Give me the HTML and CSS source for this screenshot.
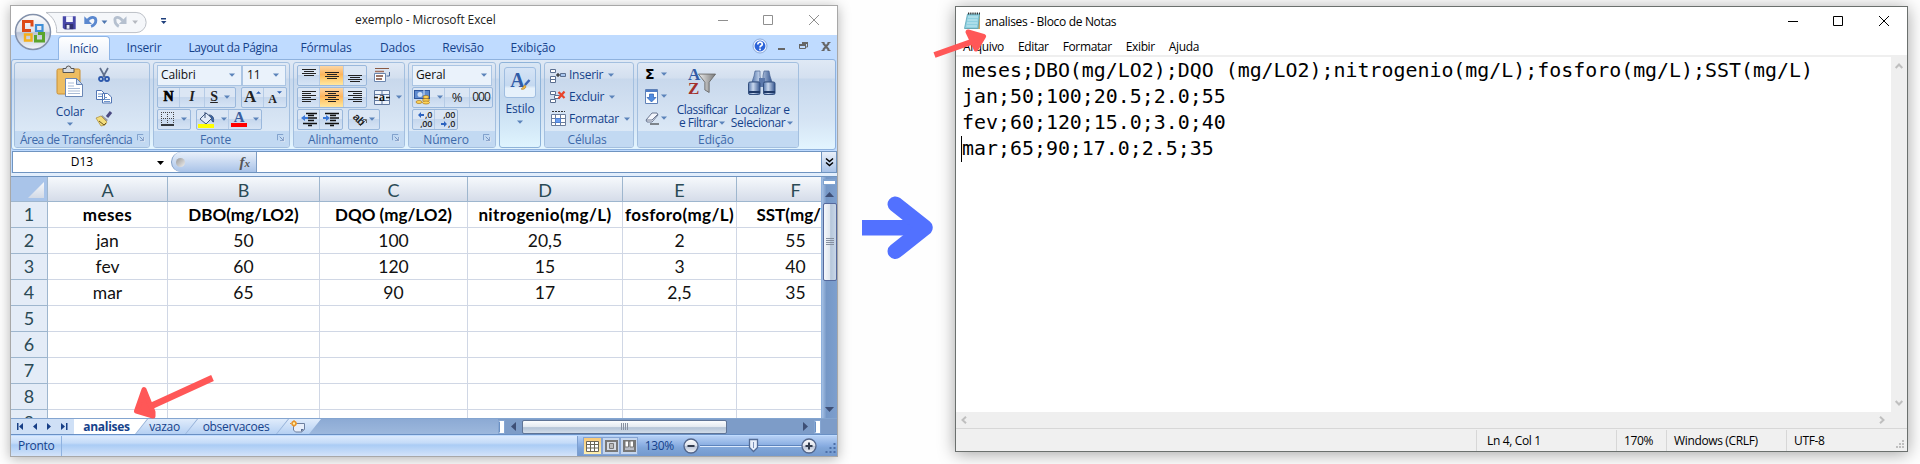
FILE: index.html
```html
<!DOCTYPE html>
<html lang="pt-BR">
<head>
<meta charset="utf-8">
<title>exemplo - Microsoft Excel</title>
<link rel="stylesheet" href="styles.css">
</head>
<body>
<svg class="defs" width="0" height="0">
  <defs>
    <linearGradient id="gloss" x1="0" y1="0" x2="0" y2="1"><stop offset="0" stop-color="#fff"/><stop offset=".48" stop-color="#dfe3ec"/><stop offset=".52" stop-color="#b9c3d6"/><stop offset="1" stop-color="#f4f6fa"/></linearGradient>
    <linearGradient id="steel" x1="0" y1="0" x2="1" y2="0"><stop offset="0" stop-color="#5577ad"/><stop offset=".4" stop-color="#c9d8ee"/><stop offset="1" stop-color="#34558f"/></linearGradient>
    <linearGradient id="funnel" x1="0" y1="0" x2="1" y2="0"><stop offset="0" stop-color="#eee"/><stop offset="1" stop-color="#777"/></linearGradient>
    <linearGradient id="corner" x1="0" y1="0" x2="0" y2="1"><stop offset="0" stop-color="#f6f8fb"/><stop offset="1" stop-color="#d3dae6"/></linearGradient>
    <symbol id="launch" viewBox="0 0 9 9"><path d="M.5 7V.5H7" fill="none" stroke="#7496c6"/><path d="M3.5 8.5h5v-5z" fill="#fff"/><path d="M3 3l4 4M7.5 3.500v4h-4" fill="none" stroke="#6a8bbb"/></symbol>
    <symbol id="drop" viewBox="0 0 6 4"><path d="M0 .5h6L3 3.700z"/></symbol>
  </defs>
</svg>

<main class="stage">
<section class="excel">
  <header class="xl-title">
    <svg class="qat" width="120" height="24" viewBox="0 0 120 24">
      <path d="M0 1h94a10.500 10.500 0 0 1 0 21H11C12 13 7 5 0 1z" fill="#f5f7fa" stroke="#b9bdc4"/>
      <path d="M17.500 5h13.500v13.500H19L17.500 17z" fill="#4747a8"/><path d="M21 5h7v6h-7z" fill="#f5f7ff"/><path d="M20 13h8.500v5.500H20z" fill="#303070"/><path d="M21.500 14h3v4h-3z" fill="#e8ecf8"/>
      <path d="M43 9.500c4-5 9-4 9 0 0 3-2 5-5 6" fill="none" stroke="#5b88cf" stroke-width="3"/><path d="M40 5v8h8z" fill="#5b88cf"/>
      <path d="M58 9.500h6l-3 3.500z" fill="#4f77b0"/>
      <path d="M80 9.500c-4-5-9-4-8 0 0 3 2 5 4 6" fill="none" stroke="#b5c0cf" stroke-width="3"/><path d="M84 5v8h-8z" fill="#b5c0cf"/>
      <path d="M90 9.500h6l-3 3.500z" fill="#b5b9c0"/>
    </svg>
    <svg class="qat-more" width="6" height="8" viewBox="0 0 6 8"><path d="M0 0h5v1.500H0zM0 3h5.500L2.700 6z" fill="#1e3f7c"/></svg>
    <span class="xl-caption">exemplo - Microsoft Excel</span>
    <svg class="win-btns" width="102" height="12" viewBox="0 0 102 12" fill="none" stroke="#8f8f8f"><path d="M0 6.500h10M45.500 1.500h9v9h-9zM91 1l10 10M101 1L91 11"/></svg>
  </header>

  <nav class="xl-tabs">
    <span class="tab on">Início</span>
    <span class="tab t2">Inserir</span>
    <span class="tab t3">Layout da Página</span>
    <span class="tab t4">Fórmulas</span>
    <span class="tab t5">Dados</span>
    <span class="tab t6">Revisão</span>
    <span class="tab t7">Exibição</span>
    <svg class="mdi" width="80" height="16" viewBox="0 0 80 16">
      <circle cx="8" cy="8" r="6.200" fill="#2c63d8" stroke="#eef4ff" stroke-width="1.500"/><circle cx="8" cy="8" r="7" fill="none" stroke="#6b8fc9" stroke-width=".7"/>
      <path d="M5.800 6.500c0-3.300 4.700-3 4.400-.2C10 8 8 7.600 8 9.500M8 10.500v1.700" fill="none" stroke="#fff" stroke-width="1.700"/>
      <path d="M26 10h7v2h-7zM50 4h6v2h-6zM47 6h7v2h-7z" fill="#666"/><path d="M47.500 6.500h6v4h-6zM55.500 5v4h-1.500" fill="none" stroke="#666"/>
      <path d="M71 5l6 7M77 5l-6 7" stroke="#666" stroke-width="2"/><path d="M69.500 4.500h3M75.500 4.500h3M69.500 12.500h3M75.500 12.500h3" stroke="#666"/>
    </svg>
  </nav>

  <div class="ribbon">
    <div class="group g-clip">
      <div class="gbody">
        <div class="big paste">
          <svg width="28" height="31" viewBox="0 0 28 31"><rect x="1" y="3" width="23" height="25" rx="1.500" fill="#edbd62" stroke="#c98f35"/><path d="M7 2.500h3a2.500 2.500 0 0 1 5 0h3v4H7z" fill="#d8dce2" stroke="#555"/><path d="M9.500 12.500h11l6 6V30.500h-17z" fill="#fff" stroke="#6b87b5"/><path d="M20.500 12.500v6h6z" fill="#cddcf0" stroke="#6b87b5"/><path d="M12 17h6M12 20h6M12 22.500h12M12 25h12M12 27.500h12" stroke="#a9bbd6"/></svg>
          <span>Colar</span><svg class="drop" width="6" height="4"><use href="#drop"/></svg>
        </div>
        <div class="stack">
          <svg width="16" height="16" viewBox="0 0 16 16"><path d="M4 1l5 9M12 1L7 10" stroke="#5f6f8c" stroke-width="1.700"/><circle cx="5" cy="12" r="2" fill="none" stroke="#2c58ac" stroke-width="1.800"/><circle cx="11" cy="12" r="2" fill="none" stroke="#2c58ac" stroke-width="1.800"/></svg>
          <svg width="16" height="16" viewBox="0 0 16 16" fill="#fff" stroke="#5276b4"><path d="M.5 1.500h5l3 3v6h-8zM6.500 4.500h5l4 3.500v6h-9z"/><path d="M2 5h4M2 7.500h4M8 8.500h3M8 10.500h6M8 12.500h6" stroke="#6d93ca"/></svg>
          <svg width="16" height="16" viewBox="0 0 16 16"><path d="M11 6l4-5" stroke="#4b4a82" stroke-width="3"/><path d="M6 4l6 5-2 2-5-5z" fill="#999aa5"/><path d="M0 7l5-2 6 6-2 3-4 1z" fill="#f3dd7b" stroke="#a98a35" stroke-width=".7"/><path d="M3 10l5 4 2-2" stroke="#6a5420" fill="none"/></svg>
        </div>
      </div>
      <div class="glabel"><span class="tight">Área de Transferência</span><svg class="launch" width="8" height="8"><use href="#launch"/></svg></div>
    </div>

    <div class="group g-font">
      <div class="rows">
        <div class="row">
          <span class="field f1">Calibri<svg class="drop" width="6" height="4"><use href="#drop"/></svg></span>
          <span class="field f2">11<svg class="drop" width="6" height="4"><use href="#drop"/></svg></span>
        </div>
        <div class="row r5">
          <span class="btns"><b class="c serif w22">N</b><i class="c serif w24">I</i><span class="c serif w30 und"><u>S</u><svg class="drop" width="6" height="4"><use href="#drop"/></svg></span></span>
          <span class="btns"><span class="c serif w22 ga">A<svg class="mini" width="5" height="3" viewBox="0 0 6 3"><path d="M0 3h6L3 0z"/></svg></span><span class="c serif w22 gs">A<svg class="mini" width="5" height="3" viewBox="0 0 6 3"><path d="M0 0h6L3 3z"/></svg></span></span>
        </div>
        <div class="row r5">
          <span class="btns"><span class="c w33"><svg width="14" height="14" viewBox="0 0 14 14"><path d="M0 .5h13M0 6.500h13M.5 0v12M6.500 0v12M12.500 0v12" stroke="#444" stroke-dasharray="1 1"/><path d="M0 13h13" stroke="#000" stroke-width="1.500"/></svg><svg class="drop" width="6" height="4"><use href="#drop"/></svg></span></span>
          <span class="btns"><span class="c w33"><svg width="17" height="17" viewBox="0 0 17 17"><path d="M2 8l6-6 6 5-6 6z" fill="#e3ecf8" stroke="#3d557c"/><path d="M7 1v6M11 4c4 0 5 3 4.500 7-1.500 0-2-2-2-4z" fill="#3b6cb7" stroke="#3d557c"/><path d="M0 13h16v4H0z" fill="#ff0"/></svg><svg class="drop" width="6" height="4"><use href="#drop"/></svg></span><span class="c w33"><span class="fcolor serif">A</span><svg class="drop" width="6" height="4"><use href="#drop"/></svg></span></span>
        </div>
      </div>
      <div class="glabel"><span>Fonte</span><svg class="launch" width="8" height="8"><use href="#launch"/></svg></div>
    </div>

    <div class="group g-align">
      <div class="rows">
        <div class="row r7">
          <span class="btns al"><span class="c"><svg width="14" height="14" viewBox="0 0 14 14"><path d="M0 1.500h14M2 3.500h10M0 5.500h14M2 7.500h10" stroke="#222"/></svg></span><span class="c hot"><svg width="14" height="14" viewBox="0 0 14 14"><path d="M0 4.500h14M2 6.500h10M0 8.500h14M2 10.500h10" stroke="#222"/></svg></span><span class="c"><svg width="14" height="14" viewBox="0 0 14 14"><path d="M0 7.500h14M2 9.500h10M0 11.500h14M2 13.500h10" stroke="#222"/></svg></span></span>
          <svg width="17" height="16" viewBox="0 0 17 16"><path d="M1 1.500h14" stroke="#8a5a44"/><path d="M1 4.500h9M1 12.500h9" stroke="#a07060" stroke-width="1.500"/><path d="M.5 6.500h11v8H.5z" fill="#fff" stroke="#6b86ae"/><path d="M2 9h7M2 12h6" stroke="#7a4a3a" stroke-width="1.500"/><path d="M15.500 5v4h-3" fill="none" stroke="#4c6c9c"/></svg>
        </div>
        <div class="row r7">
          <span class="btns al"><span class="c"><svg width="14" height="14" viewBox="0 0 14 14"><path d="M0 1.500h14M0 3.500h9M0 5.500h14M0 7.500h9M0 9.500h14M0 11.500h9" stroke="#222"/></svg></span><span class="c hot"><svg width="14" height="14" viewBox="0 0 14 14"><path d="M0 1.500h14M3 3.500h8M0 5.500h14M3 7.500h8M0 9.500h14M3 11.500h8" stroke="#222"/></svg></span><span class="c"><svg width="14" height="14" viewBox="0 0 14 14"><path d="M0 1.500h14M5 3.500h9M0 5.500h14M5 7.500h9M0 9.500h14M5 11.500h9" stroke="#222"/></svg></span></span>
          <span class="merge"><svg width="16" height="15" viewBox="0 0 16 15"><path d="M.5.5h15v14H.5zM.5 4.500h15M.5 10.500h15M8 .5v4M8 10.500v4" fill="#eef4fc" stroke="#60789f"/><path d="M0 7.500h4M12 7.500h4" stroke="#222" stroke-width="1.500"/></svg><b>a</b><svg class="drop" width="6" height="4"><use href="#drop"/></svg></span>
        </div>
        <div class="row r5">
          <span class="btns"><span class="c w22"><svg width="16" height="14" viewBox="0 0 16 14"><path d="M5 1.500h11M7 3.500h6M7 6h9M7 8.500h6M2 11.500h14M7 13.500h4" stroke="#111" stroke-width="1.300"/><path d="M0 6l4-3v2h3v2H4v2z" fill="#3b78d8"/></svg></span><span class="c w22"><svg width="16" height="14" viewBox="0 0 16 14"><path d="M2 1.500h14M7 3.500h6M7 6h9M7 8.500h6M2 11.500h14M7 13.500h4" stroke="#111" stroke-width="1.300"/><path d="M7 6L3 3v2H0v2h3v2z" fill="#3b78d8"/></svg></span></span>
          <span class="btns"><span class="c w31"><span class="orient">ab</span><svg class="diag" width="8" height="8" viewBox="0 0 8 8"><path d="M0 8L6 2M3 1.500h3.500V5" fill="none" stroke="#666"/></svg><svg class="drop" width="6" height="4"><use href="#drop"/></svg></span></span>
        </div>
      </div>
      <div class="glabel"><span>Alinhamento</span><svg class="launch" width="8" height="8"><use href="#launch"/></svg></div>
    </div>

    <div class="group g-num">
      <div class="rows">
        <div class="row"><span class="field f3">Geral<svg class="drop" width="6" height="4"><use href="#drop"/></svg></span></div>
        <div class="row">
          <span class="btns"><span class="c w33"><svg width="17" height="16" viewBox="0 0 17 16"><rect x=".5" y="1.500" width="15" height="8" fill="#5f8bcf" stroke="#2f569b"/><circle cx="6" cy="5.500" r="2.500" fill="#cfe0f7"/><path d="M10 1v5" stroke="#cfe0f7"/><ellipse cx="12" cy="8" rx="3" ry="1.500" fill="#ffd65c" stroke="#a8761a" stroke-width=".7"/><ellipse cx="12" cy="11" rx="3.500" ry="1.500" fill="#ffd65c" stroke="#a8761a" stroke-width=".7"/><ellipse cx="12" cy="13.500" rx="3.500" ry="1.500" fill="#ffd65c" stroke="#a8761a" stroke-width=".7"/><ellipse cx="5" cy="13" rx="3" ry="1.500" fill="#ffd65c" stroke="#a8761a" stroke-width=".7"/></svg><svg class="drop" width="6" height="4"><use href="#drop"/></svg></span><span class="c w24 pct">%</span><span class="c w22 mil">000</span></span>
        </div>
        <div class="row">
          <span class="btns"><span class="c w22 dec"><span><svg class="arw" width="6" height="6" viewBox="0 0 6 6"><path d="M0 3l3-3v2h3v2H3v2z"/></svg>,0</span><span>,00</span></span><span class="c w22 dec"><span>,00</span><span><svg class="arw" width="6" height="6" viewBox="0 0 6 6"><path d="M6 3L3 0v2H0v2h3v2z"/></svg>,0</span></span></span>
        </div>
      </div>
      <div class="glabel"><span>Número</span><svg class="launch" width="8" height="8"><use href="#launch"/></svg></div>
    </div>

    <div class="group g-style">
      <div class="style-box"><span class="serif">A</span><svg width="9" height="10" viewBox="0 0 9 10"><path d="M8.500 0L4 5" stroke="#3f67b5" stroke-width="2.500"/><path d="M0 9c2 0 2-4 4-4l1 2c-1 2-3 3-5 2z" fill="#f0b63e" stroke="#9a6a20" stroke-width=".5"/></svg></div>
      <span>Estilo</span><svg class="drop" width="6" height="4"><use href="#drop"/></svg>
    </div>

    <div class="group g-cells">
      <div class="rows">
        <div class="row cellrow"><svg width="16" height="15" viewBox="0 0 16 15" fill="#fff" stroke="#5b6f90"><path d="M.5 1.500h5v3h-5zM.5 8.500h5v3h-5zM.5 11.500h5v3h-5z"/><path d="M10.500 5.500h5v3h-5z" fill="#a9c6ef"/><path d="M6 7h4M8 5v4" stroke="#111"/></svg><span>Inserir</span><svg class="drop" width="6" height="4"><use href="#drop"/></svg></div>
        <div class="row cellrow"><svg width="16" height="15" viewBox="0 0 16 15" fill="#fff" stroke="#5b6f90"><path d="M.5 1.500h5v3h-5zM4.500 5.500h5v3h-5zM.5 9.500h5v3h-5z"/><path d="M8.500 2l6 6M14.500 1.500l-6 7" stroke="#e8442c" stroke-width="2.200"/></svg><span>Excluir</span><svg class="drop" width="6" height="4"><use href="#drop"/></svg></div>
        <div class="row cellrow"><svg width="16" height="16" viewBox="0 0 16 16" fill="#fff" stroke="#6b7d9c"><path d="M1.500 3.500h14v11h-14zM1.500 7.500h14M1.500 11.500h14M5.500 3v12M10.500 3v12"/><path d="M5.500 7.500h5v4h-5z" fill="#6a9df0" stroke="#4f80d0"/><path d="M2 .5h13" stroke="#333" stroke-dasharray="2 1"/></svg><span>Formatar</span><svg class="drop" width="6" height="4"><use href="#drop"/></svg></div>
      </div>
      <div class="glabel"><span>Células</span></div>
    </div>

    <div class="group g-edit">
      <div class="gbody">
        <div class="stack ed">
          <span class="item"><b class="sigma">Σ</b><svg class="drop" width="6" height="4"><use href="#drop"/></svg></span>
          <span class="item"><svg width="13" height="15" viewBox="0 0 13 15"><path d="M.5.500h12v14H.5z" fill="#fff" stroke="#5f81b7"/><path d="M1 1h11v2H1z" fill="#4f7cc6"/><path d="M4.500 5h4v3.500H11L6.500 13 2 8.500h2.500z" fill="#4f8be0" stroke="#2c5fb2" stroke-width=".7"/></svg><svg class="drop" width="6" height="4"><use href="#drop"/></svg></span>
          <span class="item"><svg width="15" height="13" viewBox="0 0 15 13"><path d="M1 8l6-7h5l1 2-6 7H2z" fill="#f3f5fb" stroke="#6c7892"/><path d="M7 8h-6M7 8l6-6" stroke="#6c7892" fill="none"/><path d="M5 12h9" stroke="#222"/></svg><svg class="drop" width="6" height="4"><use href="#drop"/></svg></span>
        </div>
        <div class="big sort">
          <span class="az"><span class="letters serif"><span class="la">A</span><span class="lz">Z</span></span><svg width="18" height="23" viewBox="0 0 21 23"><path d="M.5.500h20L13 10v12l-5-3v-9z" fill="url(#funnel)" stroke="#666"/></svg></span>
          <span>Classificar</span><span>e Filtrar <svg class="drop" width="6" height="4"><use href="#drop"/></svg></span>
        </div>
        <div class="big find">
          <svg width="28" height="26" viewBox="0 0 28 26"><path d="M7 1h5v5l1 6H4l2-6zM16 1h5l1 5 2 6h-9V6z" fill="url(#steel)" stroke="#4c6594" stroke-width=".7"/><path d="M11 8h6v9h-6z" fill="#5b78ab"/><rect x=".5" y="12" width="11.500" height="12.500" rx="1.500" fill="url(#steel)" stroke="#34507f"/><rect x="15.500" y="12" width="11.500" height="12.500" rx="1.500" fill="url(#steel)" stroke="#34507f"/><path d="M1 22h11M16 22h11" stroke="#203a68" stroke-width="2"/></svg>
          <span>Localizar e</span><span>Selecionar <svg class="drop" width="6" height="4"><use href="#drop"/></svg></span>
        </div>
      </div>
      <div class="glabel"><span>Edição</span></div>
    </div>
  </div>

  <div class="formula">
    <span class="namebox">D13</span>
    <svg class="namedrop" width="7" height="4" viewBox="0 0 7 4"><path d="M0 0h7L3.500 4z"/></svg>
    <span class="fx"><i class="knob"></i><i class="f">f<small>x</small></i></span>
    <span class="finput"></span>
    <span class="fexp"><svg width="7" height="9" viewBox="0 0 7 9" fill="none" stroke="#000" stroke-width="1.500"><path d="M0 .500l3.500 3L7 .500M0 4.500l3.500 3 3.500-3"/></svg></span>
  </div>
  <div class="strip"></div>

  <div class="sheet">
    <div class="grid">
      <span class="hc all"><svg width="16" height="16" viewBox="0 0 16 16"><path d="M0 16h16V0z" fill="url(#corner)"/></svg></span><span class="hc">A</span><span class="hc">B</span><span class="hc">C</span><span class="hc">D</span><span class="hc">E</span><span class="hc">F</span>
      <span class="rh">1</span><b class="wide">meses</b><b>DBO(mg/LO2)</b><b>DQO (mg/LO2)</b><b class="wide">nitrogenio(mg/L)</b><b class="wide">fosforo(mg/L)</b><b>SST(mg/L)</b>
      <span class="rh">2</span><span>jan</span><span>50</span><span>100</span><span>20,5</span><span>2</span><span>55</span>
      <span class="rh">3</span><span>fev</span><span>60</span><span>120</span><span>15</span><span>3</span><span>40</span>
      <span class="rh">4</span><span>mar</span><span>65</span><span>90</span><span>17</span><span>2,5</span><span>35</span>
      <span class="rh">5</span><span></span><span></span><span></span><span></span><span></span><span></span>
      <span class="rh">6</span><span></span><span></span><span></span><span></span><span></span><span></span>
      <span class="rh">7</span><span></span><span></span><span></span><span></span><span></span><span></span>
      <span class="rh">8</span><span></span><span></span><span></span><span></span><span></span><span></span>
      <span class="rh">9</span><span></span><span></span><span></span><span></span><span></span><span></span>
    </div>
    <div class="vbar">
      <span class="split"></span>
      <svg class="va" width="9" height="5" viewBox="0 0 9 5"><path d="M0 5h9L4.500 0z" fill="#3e4f76"/></svg>
      <span class="vthumb"><svg width="8" height="8" viewBox="0 0 8 8"><path d="M0 .500h8M0 2.500h8M0 4.500h8M0 6.500h8" stroke="#8790a0"/></svg></span>
      <svg class="vd" width="9" height="5" viewBox="0 0 9 5"><path d="M0 0h9L4.500 5z" fill="#3e4f76"/></svg>
    </div>
  </div>

  <div class="sheettabs">
    <svg class="navs" width="63" height="15" viewBox="0 0 63 15"><path d="M6 4h1.500v7H6zM12 4v7L8 7.500zM26 4v7l-4-3.500zM36 4v7l4-3.500zM50 4v7l4-3.500zM55 4h1.500v7H55z" fill="#173f86"/></svg>
    <span class="st on">analises</span><span class="st s2">vazao</span><span class="st s3">observacoes</span>
    <span class="st s4"><svg width="15" height="13" viewBox="0 0 15 13"><path d="M3.500 3.500h11v6l-3 2.500h-6l-2-2z" fill="#e7eefa" stroke="#6d7f9f"/><path d="M14 9l-3 3V9z" fill="#5b6f92"/><circle cx="4" cy="3.500" r="2" fill="#fff1a8" stroke="#e8922a" stroke-width="1.500"/><path d="M4 0v7M0 3.500h8" stroke="#e8922a" stroke-dasharray="1.200 4.600"/></svg></span>
    <span class="tabfill"></span>
    <span class="hbar"><i class="hsplit"></i><svg class="ha" width="5" height="9" viewBox="0 0 5 9"><path d="M5 0v9L0 4.500z" fill="#3e4f76"/></svg><span class="hthumb"><svg width="8" height="7" viewBox="0 0 8 7"><path d="M.500 0v7M2.500 0v7M4.500 0v7M6.500 0v7" stroke="#8790a0"/></svg></span><svg class="hd" width="5" height="9" viewBox="0 0 5 9"><path d="M0 0v9l5-4.500z" fill="#3e4f76"/></svg><i class="hsplit last"></i></span>
  </div>

  <footer class="xl-status">
    <span class="ready">Pronto</span><span class="sfill"></span>
    <span class="views"><i class="v on"><svg width="13" height="11" viewBox="0 0 13 11"><path d="M.5.500h12v10H.5zM.5 3.500h12M.5 7h12M4.500.500v10M8.500.500v10" fill="#fff" stroke="#6a6455"/></svg></i><i class="v"><svg width="13" height="12" viewBox="0 0 13 12"><path d="M1 1h11v10H1z" fill="#d7dce4" stroke="#777" stroke-width="2"/><path d="M4.500 3.500h4v5h-4zM5 5h3M5 7h3" fill="#fff" stroke="#777"/></svg></i><i class="v"><svg width="13" height="12" viewBox="0 0 13 12"><path d="M1 1h11v10H1z" fill="#b9bdc6" stroke="#777" stroke-width="2"/><path d="M2 1h3.500v6H2zM7 1h3.500v6H7z" fill="#fff" stroke="#777"/></svg></i></span>
    <span class="zoom">130%</span>
    <svg class="slider" width="149" height="20" viewBox="0 0 149 20"><path d="M24 9.500h102" stroke="#5d84bd"/><path d="M24 10.500h102" stroke="#dceafd"/><circle cx="15" cy="10" r="7" fill="url(#gloss)" stroke="#52658a" stroke-width="1.300"/><path d="M11.500 10h7" stroke="#333c4e" stroke-width="2"/><path d="M73.500 3.500h8v8l-4 4-4-4z" fill="#e8effa" stroke="#536c97" stroke-width="1.300"/><path d="M77.500 6v6" stroke="#7d91b5"/><circle cx="133" cy="10" r="7" fill="url(#gloss)" stroke="#52658a" stroke-width="1.300"/><path d="M129.500 10h7M133 6.500v7" stroke="#333c4e" stroke-width="2"/></svg>
    <svg class="grip" width="11" height="11" viewBox="0 0 11 11"><path d="M8 0h2v2H8zM4 4h2v2H4zM8 4h2v2H8zM0 8h2v2H0zM4 8h2v2H4zM8 8h2v2H8z" fill="#4c6fa8"/></svg>
  </footer>

  <svg class="orb" width="38" height="38" viewBox="0 0 38 38">
    <circle cx="19" cy="19" r="17.500" fill="url(#gloss)" stroke="#8391ab" stroke-width="1.500"/>
    <g fill="none" stroke-width="3"><path d="M17 17.500H9.500v-9H18v5" stroke="#dd4a16"/><path d="M22 12h6.500v6H22z" stroke="#3f8fd8" stroke-width="2.200"/><path d="M11 21.500h6.500v6H11z" stroke="#f5b01c" stroke-width="2.400"/><path d="M21.500 22v6h8v-7.500H24" stroke="#5aa52c"/></g>
  </svg>
</section>

<svg class="bigarrow" width="74" height="66" viewBox="0 0 74 66"><path d="M0 25h56v15.500H0z" fill="#5271ff"/><path d="M33.300 9.200L63 32.700 33.300 56.300" fill="none" stroke="#5271ff" stroke-width="15.500" stroke-linecap="round" stroke-linejoin="round"/></svg>

<section class="note">
  <header class="nt-title">
    <svg width="17" height="18" viewBox="0 0 17 18"><path d="M4 3h12v14H1z" fill="#c9a86a"/><path d="M3.500 2h12L14 16.500H.5z" fill="#8fd0e0" stroke="#5ba5b8" stroke-width=".8"/><path d="M4 5h10M3.500 8h10M3 11h10.500M2.500 14h10.500" stroke="#c8ebf2"/><path d="M4 1.500h12" stroke="#333" stroke-width="2" stroke-dasharray="1.200 1"/></svg>
    <span class="nt-cap">analises - Bloco de Notas</span>
    <svg class="nt-btns" width="102" height="12" viewBox="0 0 102 12" fill="none" stroke="#000"><path d="M0 6.500h10M45.500 1.500h9v9h-9zM91 1l10 10M101 1L91 11"/></svg>
  </header>
  <nav class="nt-menu"><span>Arquivo</span><span>Editar</span><span>Formatar</span><span>Exibir</span><span>Ajuda</span></nav>
  <div class="nt-main">
    <div class="nt-text"><div>meses;DBO(mg/LO2);DQO (mg/LO2);nitrogenio(mg/L);fosforo(mg/L);SST(mg/L)</div><div>jan;50;100;20.5;2.0;55</div><div>fev;60;120;15.0;3.0;40</div><div class="caret">mar;65;90;17.0;2.5;35</div></div>
    <div class="nt-vbar"><svg width="8" height="6" viewBox="0 0 8 6"><path d="M.700 5L4 1.500 7.300 5" fill="none" stroke="#bfbfbf" stroke-width="2"/></svg><svg width="8" height="6" viewBox="0 0 8 6"><path d="M.700 1L4 4.500 7.300 1" fill="none" stroke="#bfbfbf" stroke-width="2"/></svg></div>
  </div>
  <div class="nt-hbar"><svg width="6" height="8" viewBox="0 0 6 8"><path d="M5 .700L1.500 4 5 7.300" fill="none" stroke="#bfbfbf" stroke-width="2"/></svg><svg width="6" height="8" viewBox="0 0 6 8"><path d="M1 .700L4.500 4 1 7.300" fill="none" stroke="#bfbfbf" stroke-width="2"/></svg></div>
  <footer class="nt-status"><span class="n1">Ln 4, Col 1</span><span class="n2">170%</span><span class="n3">Windows (CRLF)</span><span class="n4">UTF-8</span><svg class="ngrip" width="9" height="9" viewBox="0 0 9 9"><path d="M6 0h2v2H6zM3 3h2v2H3zM6 3h2v2H6zM0 6h2v2H0zM3 6h2v2H3zM6 6h2v2H6z" fill="#bfbfbf"/></svg></footer>
</section>
</main>

<svg class="red red-sheet" width="84" height="48" viewBox="0 0 84 48"><path d="M80.500 6L17 35" stroke="#ff5757" stroke-width="6.500"/><path d="M4.500 39L12 17.500l9 22.500v4z" fill="#ff5757" stroke="#ff5757" stroke-width="5" stroke-linejoin="round"/></svg>
<svg class="red red-note" width="58" height="30" viewBox="0 0 58 30"><path d="M2.500 28L42 14" stroke="#ff5757" stroke-width="6"/><path d="M51.500 9.500L36 5l8 17z" fill="#ff5757" stroke="#ff5757" stroke-width="5" stroke-linejoin="round"/></svg>
</body>
</html>
```
FILE: styles.css
```css
* { box-sizing: border-box; }
body {
  margin: 0; width: 1920px; height: 464px; overflow: hidden; position: relative;
  background: #fefefe; font: 12px/16px "Open Sans", "Noto Sans", sans-serif; color: #000;
}
svg { display: block; flex: none; overflow: visible; }
.defs { position: absolute; }
.stage { display: flex; align-items: flex-start; padding: 5px 0 0 10px; }
.serif { font-family: "Liberation Serif", serif; }
.drop { fill: #5b83ba; }

/* spreadsheet window */
.excel {
  position: relative; flex: none; width: 828px; height: 452px; display: flex; flex-direction: column;
  border: 1px solid #a8a8a8; background: #bfdbff; box-shadow: 0 2px 12px rgba(0,0,0,.3); color: #15428b;
}
.xl-title { display: flex; align-items: flex-start; height: 29px; background: #fff; flex: none; }
.qat { margin: 5px 0 0 35px; width: 115px; }
.qat-more { margin: 12px 0 0; }
.xl-caption { margin: 6px 0 0 188px; width: 146px; white-space: nowrap; color: #222; letter-spacing: -.1px; }
.win-btns { margin: 8px 17px 0 auto; }

.xl-tabs { display: flex; height: 24px; flex: none; background: #bfdbff; letter-spacing: -.15px; }
.tab { flex: none; text-align: center; line-height: 25px; white-space: nowrap; }
.tab.on { margin-left: 47px; width: 52px; height: 24px; margin-top: 1px; line-height: 23px; border: 1px solid #8fb5e6; border-bottom: 0; border-radius: 4px 4px 0 0; background: linear-gradient(#fff, #e6eefa); position: relative; z-index: 1; }
.t2 { width: 68px; } .t3 { width: 110px; letter-spacing: -.4px; } .t4 { width: 74px; margin-left: 1px; } .t5 { width: 69px; } .t6 { width: 62px; } .t7 { width: 78px; }
.mdi { margin: 3px 5px 0 auto; }

.ribbon {
  display: flex; flex: none; height: 91px; margin-right: 1px; padding: 2px 2px; gap: 3px; border: 1px solid #8fb2de; border-radius: 3px;
  background: linear-gradient(#dfe9f5 0, #d4e0f0 18px, #c7d8ed 19px, #d5e4f4 60px, #e3f5ff 100%);
  letter-spacing: -.15px;
}
.group { display: flex; flex-direction: column; flex: none; height: 86px; border: 1px solid #a3bfdf; border-radius: 3px; overflow: hidden; background: linear-gradient(#e0e9f5 0, #d3dfef 15px, #c8d8ec 16px, #dbe8f6 68px); }
.g-clip { width: 136px; } .g-font { width: 137px; } .g-align { width: 112px; } .g-num { width: 88px; } .g-style { width: 42px; } .g-cells { width: 90px; } .g-edit { width: 162px; }
.glabel { display: flex; align-items: center; height: 16px; margin-top: auto; background: #c2d9f2; color: #3e6aaa; padding-right: 4px; }
.glabel span { flex: 1; text-align: center; line-height: 15px; white-space: nowrap; }
.glabel .tight { letter-spacing: -.5px; }
.gbody { display: flex; flex: 1; }
.rows { padding: 1px 0 0 3px; }
.row { display: flex; height: 22px; align-items: center; }
.r5 { gap: 5px; } .r7 { gap: 7px; }
.btns { display: flex; height: 21px; border: 1px solid #9ab8dc; border-radius: 2px; background: linear-gradient(#dbe6f4 0 45%, #c6d7ed 50%, #d6e4f5); }
.c { display: flex; align-items: center; justify-content: center; gap: 6px; color: #222; border-right: 1px solid #b5cbe6; }
.c:last-child { border-right: 0; }
.w22 { width: 22px; } .w24 { width: 25px; } .w30 { width: 30px; } .w33 { width: 32px; } .w31 { width: 30px; }
.c.w31 { gap: 1px; }
.row b.c { font-size: 14px; font-weight: 900; color: #000; -webkit-text-stroke: .7px #000; }
.row i.c, .und { font-size: 14px; font-weight: bold; }
.c.ga { font-size: 17px; font-weight: bold; gap: 0; } .c.gs { font-size: 12px; font-weight: bold; gap: 0; padding-top: 3px; }
.mini { fill: #2c5fb2; align-self: flex-start; margin-top: 3px; } .gs .mini { margin-top: 0; }
.fcolor { font-size: 15px; font-weight: bold; color: #3a5f9f; line-height: 13px; height: 16px; width: 16px; text-align: center; border-bottom: 4px solid #f00; }
.field { display: flex; justify-content: space-between; align-items: center; height: 21px; padding: 0 6px 0 3px; border: 1px solid #abc5e3; background: #eaf2fb; color: #111; }
.f1 { width: 85px; } .f2 { width: 44px; padding-left: 4px; } .f3 { width: 80px; padding-right: 4px; }
.al .c { width: 22px; } .al .hot { width: 24px; background: linear-gradient(#fcd6a5, #fdb45c 45%, #ffc66a 60%, #ffe7a0); }
.merge { display: flex; align-items: center; position: relative; gap: 6px; }
.merge b { position: absolute; left: 5px; top: 1px; font: bold 12px/12px "Liberation Serif", serif; color: #111; }
.orient { transform: rotate(45deg); font: bold 11px/11px "Liberation Sans", sans-serif; letter-spacing: -.5px; }
.diag { margin-left: -6px; margin-top: 5px; }
.pct { font-size: 13px; } .mil { letter-spacing: -1px; }
.c.dec { flex-direction: column; gap: 0; align-items: flex-end; padding-right: 2px; font: 600 9px/9px "Open Sans", sans-serif; letter-spacing: -.3px; }
.dec span { display: flex; align-items: center; height: 9px; }
.arw { fill: #2c63c0; margin-right: 1px; }
.launch { margin-top: -2px; }

.big { display: flex; flex-direction: column; align-items: center; line-height: 13px; white-space: nowrap; letter-spacing: -.2px; }
.big .drop { display: inline-block; vertical-align: 2px; margin-left: -1px; }
.paste { width: 42px; margin-left: 34px; padding-top: 3px; }
.paste span { margin-top: 7px; line-height: 15px; }
.paste .drop { margin-top: 3px; }
.stack { display: flex; flex-direction: column; gap: 6px; padding: 4px 0 0 5px; }
.ed { width: 32px; padding: 3px 0 0 7px; gap: 6px; }
.item { display: flex; align-items: center; width: 22px; height: 16px; justify-content: space-between; }
.sigma { font: bold 14px/15px "DejaVu Sans", sans-serif; color: #000; }
.sort { width: 56px; padding-top: 5px; margin-left: 4px; letter-spacing: -.5px; }
.az { display: flex; height: 35px; }
.letters { display: flex; flex-direction: column; font-weight: bold; font-size: 17px; line-height: 14px; }
.la { color: #345ba5; } .lz { color: #a3302c; }
.az svg { margin: 4px 0 0 -2px; }
.find { width: 62px; margin-left: 1px; padding-top: 7px; letter-spacing: -.35px; }
.find > svg { margin-bottom: 7px; }
.g-style { align-items: center; border-color: #8eb3d9; background: linear-gradient(#d9e6f4, #c3d8ee 40%, #dff4fe); }
.style-box { display: flex; align-items: center; justify-content: center; width: 32px; height: 31px; margin: 4px 0 3px; border: 1px solid #9fbde0; border-radius: 3px; background: linear-gradient(#d5e4f6, #c5d9f0 60%, #e6f1fb 70%); font: bold 20px/20px "Liberation Serif", serif; color: #2f5ba6; }
.style-box span { margin-top: -6px; }
.style-box svg { margin: 4px 0 0 -4px; }
.g-style > .drop { margin-top: 3px; }
.cellrow { padding-left: 2px; gap: 3px; letter-spacing: -.25px; }
.cellrow .drop { margin-left: 2px; }

.formula { display: flex; flex: none; height: 22px; margin: 1px 0 0 1px; border: 1px solid #6f94c0; background: #fff; color: #000; }
.namebox { width: 138px; text-align: center; line-height: 20px; }
.namedrop { margin: 9px 0 0 6px; width: 7px; }
.fx { display: flex; justify-content: space-between; align-items: center; width: 86px; margin-left: 7px; border: 1px solid #7d9cc4; border-width: 0 1px 0 1px; border-radius: 11px 0 0 11px; padding: 0 6px 0 4px; background: linear-gradient(#e9f0fa, #a9c3e8); }
.knob { width: 9px; height: 9px; border-radius: 50%; background: linear-gradient(135deg, #999, #eee); }
.f { font: italic bold 15px/18px "Liberation Serif", serif; color: #555; } .f small { font-size: 11px; }
.finput { flex: 1; }
.fexp { width: 15px; display: flex; align-items: center; justify-content: center; background: linear-gradient(#e9f0fa, #a9c3e8); border-left: 1px solid #6f94c0; }
.strip { height: 4px; flex: none; border-bottom: 1px solid #6f94c0; background: #e2eefc; }

.sheet { display: flex; height: 241px; flex: none; overflow: hidden; }
.grid { display: grid; width: 810px; flex: none; overflow: hidden; grid-template-columns: 37px 120px 152px 148px 155px 114px 118px; grid-template-rows: 25px; grid-auto-rows: 26px; background: #fff; font: 17.5px/25px Lato, sans-serif; color: #111; }
.grid > * { border-right: 1px solid #d0d7e5; border-bottom: 1px solid #d0d7e5; text-align: center; white-space: nowrap; }
.grid b { font-weight: 700; color: #000; font-size: 17px; }
.grid .wide { letter-spacing: .4px; }
.grid .hc { background: linear-gradient(#f6f9fc, #d5dce9); border-color: #9eb6ce; color: #2b4a55; line-height: 26px; font-size: 18px; }
.grid .rh { background: #e4ecf7; border-color: #9eb6ce; color: #2b4a55; font-size: 18px; }
.grid .all { display: flex; justify-content: flex-end; align-items: flex-end; padding: 0 3px 3px 0; background: #a9c4e9; }
.vbar { display: flex; flex-direction: column; align-items: center; flex: 1; background: linear-gradient(90deg, #a5c0e4, #7597c6 30%, #7d9fce); border-left: 1px solid #8eb0dc; }
.split { width: 13px; height: 6px; margin-top: 2px; background: #fff; border: 1px solid #7fa3d0; border-top-width: 2px; }
.va { margin-top: 7px; }
.vthumb { display: flex; align-items: center; justify-content: center; width: 14px; height: 78px; margin-top: 6px; border: 1px solid #55699c; border-radius: 2px; background: linear-gradient(90deg, #f4f7fb, #dfe6ee 50%, #b5c6da 55%, #c9d7e8); }
.vd { margin-top: auto; margin-bottom: 6px; }

.sheettabs { display: flex; height: 17px; flex: none; background: linear-gradient(#8caad4, #9db8dd); border-bottom: 1px solid #6a90c4; border-top: 1px solid #84a5d0; }
.navs { background: #cfe0f6; }
.st { display: flex; align-items: center; justify-content: center; line-height: 15px; height: 15px; background: linear-gradient(#e0ecfb, #b5d0f3); clip-path: polygon(12px 0, 100% 0, calc(100% - 12px) 100%, 0 100%); margin-left: -11px; flex: none; letter-spacing: -.3px; }
.st.on { width: 73px; margin-left: 0; background: #fff; font-weight: bold; clip-path: polygon(0 0, 100% 0, calc(100% - 12px) 100%, 0 100%); padding-right: 8px; letter-spacing: -.3px; }
.s2 { width: 61px; padding-right: 4px; } .s3 { width: 102px; padding-right: 2px; } .s4 { width: 44px; padding-right: 4px; }
.tabfill { flex: 1; }
.hbar { display: flex; align-items: center; width: 339px; background: #7d9cc8; }
.hsplit { width: 7px; height: 14px; background: #fff; border: 2px solid #fff; border-left: 2px solid #6a90c4; outline: 1px solid #86a6d2; outline-offset: -1px; }
.ha { margin-left: 6px; }
.hthumb { display: flex; align-items: center; justify-content: center; width: 205px; height: 14px; margin-left: 6px; border: 1px solid #5f7496; border-radius: 2px; background: linear-gradient(#fafcfe, #e3e9f0 50%, #b3c3d6 55%, #d3dde9); }
.hd { margin-left: 76px; } .last { margin-left: 6px; }

.xl-status { display: flex; align-items: center; flex: none; height: 20px; margin-top: 1px; background: linear-gradient(#dceafd, #c4dbf8 35%, #aaccf5 45%, #d3e3f9); letter-spacing: -.3px; }
.ready { width: 51px; padding-left: 7px; border-right: 1px solid #8fb2e0; line-height: 19px; height: 20px; }
.sfill { flex: 1; }
.views { display: flex; align-items: center; padding-left: 5px; border-left: 1px solid #7c9fd0; height: 20px; }
.views, .zoom, .slider, .grip { background: linear-gradient(#b6d0f5, #86abe0 50%, #7fa5d8 60%, #7399ce); }
.v { display: flex; align-items: center; justify-content: center; width: 18px; height: 18px; background: #c5d6ee; border: 1px solid #86a5d4; }
.v.on { width: 19px; background: linear-gradient(#f8c878, #fff0b0); }
.zoom { width: 38px; height: 20px; line-height: 19px; text-align: right; padding-right: 2px; }
.grip { padding: 7px 0 2px; height: 20px; width: 12px; }

.orb { position: absolute; left: 3px; top: 7px; }

.bigarrow { margin: 190px 0 0 24px; }

/* text editor window */
.note { flex: none; width: 953px; height: 446px; margin: 1px 0 0 19px; display: flex; flex-direction: column; border: 1px solid #6b706e; background: #fff; box-shadow: 0 2px 16px rgba(0,0,0,.36); }
.nt-title { display: flex; align-items: flex-start; height: 31px; flex: none; padding: 5px 17px 0 8px; }
.nt-cap { margin: 2px 0 0 4px; letter-spacing: -.32px; }
.nt-btns { margin: 3px 0 0 auto; }
.nt-menu { display: flex; height: 19px; flex: none; border-bottom: 2px solid #efefef; gap: 14px; padding-left: 7px; line-height: 18px; letter-spacing: -.36px; }
.nt-main { display: flex; flex: 1; }
.nt-text { flex: 1; padding: 1px 0 0 6px; font: 19.91px/26px "DejaVu Sans Mono", monospace; white-space: pre; }
.caret { box-shadow: -1px 0 #000; }
.nt-vbar { display: flex; flex-direction: column; justify-content: space-between; align-items: center; width: 16px; background: #efefef; padding: 6px 0; }
.nt-hbar { display: flex; flex: none; justify-content: space-between; align-items: center; height: 16px; background: #efefef; padding: 0 22px 0 5px; }
.nt-status { display: flex; flex: none; height: 23px; justify-content: flex-end; align-items: center; background: #f0f0f0; border-top: 1px solid #d7d7d7; letter-spacing: -.35px; }
.nt-status span { height: 21px; line-height: 21px; border-left: 1px solid #d7d7d7; white-space: nowrap; }
.n1 { width: 140px; padding-left: 10px; } .n2 { width: 50px; padding-left: 7px; } .n3 { width: 120px; padding-left: 7px; } .n4 { width: 110px; padding-left: 7px; }
.ngrip { margin: 8px 2px 0 0; }

/* annotation arrows */
.red { position: absolute; }
.red-sheet { left: 132px; top: 372px; }
.red-note { left: 932px; top: 27px; }
```
